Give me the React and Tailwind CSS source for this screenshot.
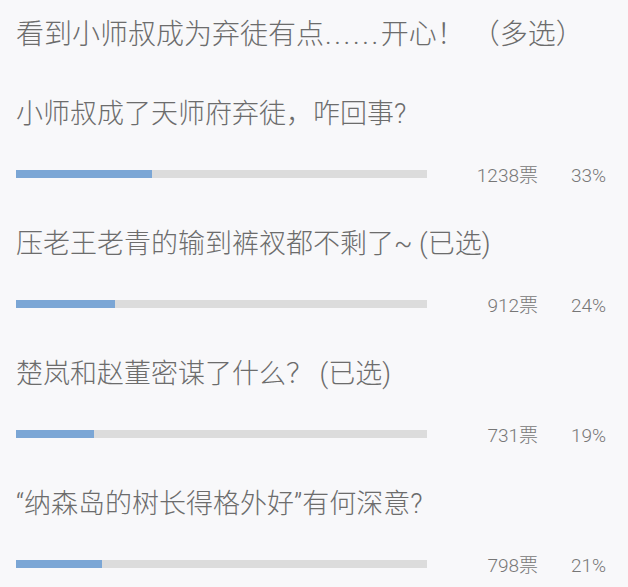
import React from "react";

const options = [
  { text: "小师叔成了天师府弃徒，咋回事?", votes: "1238票", pct: 33 },
  { text: "压老王老青的输到裤衩都不剩了~ (已选)", votes: "912票", pct: 24 },
  { text: "楚岚和赵董密谋了什么？ (已选)", votes: "731票", pct: 19 },
  { text: "“纳森岛的树长得格外好”有何深意?", votes: "798票", pct: 21 },
];

const font = {
  fontFamily: 'Roboto, "Liberation Sans", "Noto Sans CJK SC", sans-serif',
};

export default function App() {
  return (
    <div
      className="w-[628px] h-[587px] overflow-hidden bg-[#f8f8fa] pl-[16px] pt-[15px] text-[#6c6c6c]"
      style={font}
    >
      <div className="h-[40px] text-[28px] leading-[40px] font-light whitespace-nowrap">
        看到小师叔成为弃徒有点
        <span className="tracking-[2.6px] pl-[1px]">......</span>
        开心！ （多选）
      </div>
      <div className="mt-[39px] flex flex-col gap-[38px]">
        {options.map((o) => (
          <div key={o.text} className="flex flex-col">
            <div className="text-[27px] leading-[40px] font-light whitespace-nowrap">
              {o.text}
            </div>
            <div className="mt-[28px] h-[24px] flex items-center">
              <div className="w-[411px] h-[8px] bg-[#dcdcdc] flex">
                <div
                  className="h-full bg-[#7ba6d5]"
                  style={{ width: `${(411 * o.pct) / 100}px` }}
                />
              </div>
              <div className="w-[111px] text-right text-[19px] leading-[24px] font-light text-[#777777] pt-[3px]">
                {o.votes}
              </div>
              <div className="w-[68px] text-right text-[19px] leading-[24px] font-light text-[#777777] pt-[3px]">
                {o.pct}%
              </div>
            </div>
          </div>
        ))}
      </div>
    </div>
  );
}
